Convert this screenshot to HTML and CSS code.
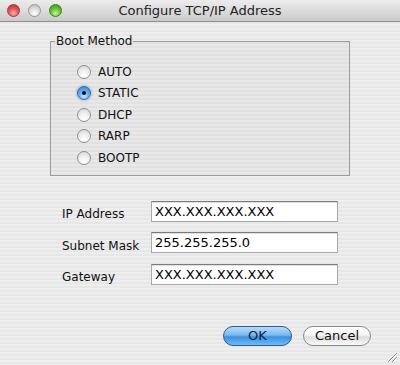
FILE: index.html
```html
<!DOCTYPE html>
<html>
<head>
<meta charset="utf-8">
<link rel="stylesheet" href="styles.css">
</head>
<body>
<div class="window">
  <div class="titlebar">
    <div class="lights">
      <span class="light red"></span>
      <span class="light gray"></span>
      <span class="light green"></span>
    </div>
    <div class="title">Configure TCP/IP Address</div>
  </div>
  <div class="content">
    <fieldset class="group">
      <legend>Boot Method</legend>
      <div class="radio"><span class="circle"></span><span>AUTO</span></div>
      <div class="radio"><span class="circle on"></span><span>STATIC</span></div>
      <div class="radio"><span class="circle"></span><span>DHCP</span></div>
      <div class="radio"><span class="circle"></span><span>RARP</span></div>
      <div class="radio"><span class="circle"></span><span>BOOTP</span></div>
    </fieldset>
    <div class="fields">
      <span class="lbl">IP Address</span><div class="field">XXX.XXX.XXX.XXX</div>
      <span class="lbl">Subnet Mask</span><div class="field">255.255.255.0</div>
      <span class="lbl">Gateway</span><div class="field">XXX.XXX.XXX.XXX</div>
    </div>
    <div class="buttons">
      <div class="btn ok">OK</div>
      <div class="btn cancel">Cancel</div>
    </div>
  </div>
  <svg class="grip" width="11" height="11" viewBox="0 0 11 11">
    <line x1="1" y1="10" x2="10" y2="1" stroke="#8a8a8a" stroke-width="1"/>
    <line x1="5" y1="10" x2="10" y2="5" stroke="#8a8a8a" stroke-width="1"/>
    <line x1="2" y1="10" x2="10" y2="2" stroke="#ffffff" stroke-width="1"/>
    <line x1="6" y1="10" x2="10" y2="6" stroke="#ffffff" stroke-width="1"/>
  </svg>
</div>
</body>
</html>
```
FILE: styles.css
```css
html, body {
  margin: 0;
  padding: 0;
}
body {
  width: 400px;
  height: 365px;
  overflow: hidden;
  font-family: "DejaVu Sans", sans-serif;
  font-size: 12px;
  color: #111;
}
.window {
  position: relative;
  width: 400px;
  height: 365px;
  background: repeating-linear-gradient(to bottom, #eeeeee 0 2px, #e7e7e7 2px 4px);
}
.titlebar {
  height: 21px;
  border-bottom: 1px solid #8e8e8e;
  background: linear-gradient(to bottom, #ececec 0%, #dcdcdc 50%, #c9c9c9 100%);
  display: flex;
  align-items: center;
  position: relative;
}
.lights {
  display: flex;
  gap: 8px;
  padding-left: 7px;
}
.light {
  width: 13px;
  height: 13px;
  border-radius: 50%;
  box-sizing: border-box;
}
.red {
  background: radial-gradient(circle at 50% 75%, #ffb3b3 0%, #e8595a 45%, #b52a2c 100%);
  border: 1px solid #9a3a3a;
}
.gray {
  background: radial-gradient(circle at 50% 75%, #ffffff 0%, #dcdcdc 50%, #b0b0b0 100%);
  border: 1px solid #9a9a9a;
}
.green {
  background: radial-gradient(circle at 50% 75%, #c8f5a0 0%, #6bc43b 45%, #3b8f1a 100%);
  border: 1px solid #3f7d25;
}
.title {
  position: absolute;
  left: 0;
  right: 0;
  top: 0;
  line-height: 22px;
  text-align: center;
  font-size: 13px;
  color: #222;
}
.content {
  display: flex;
  flex-direction: column;
}
.group {
  margin: 12px 0 0 50px;
  width: 300px;
  box-sizing: border-box;
  border: 1px solid #9c9c9c;
  padding: 13px 0 6px 26px;
  background: rgba(0, 0, 0, 0.025);
}
.group legend {
  padding: 0 1px;
  margin-left: -22px;
  line-height: 14px;
  font-size: 12px;
  color: #111;
}
.radio {
  height: 21.5px;
  display: flex;
  align-items: center;
  gap: 7px;
}
.circle {
  width: 14px;
  height: 14px;
  border-radius: 50%;
  box-sizing: border-box;
  border: 1px solid #8d8d8d;
  background: radial-gradient(circle at 50% 80%, #ffffff 0%, #f2f2f2 40%, #d4d4d4 100%);
  position: relative;
}
.circle.on {
  border-color: #3a67a6;
  background: radial-gradient(circle at 50% 75%, #c8e8ff 0%, #6fb4ef 40%, #2f7fd3 100%);
  box-shadow: 0 0 2px 1px rgba(90, 150, 220, 0.45);
}
.circle.on::after {
  content: "";
  position: absolute;
  left: 4px;
  top: 4px;
  width: 4px;
  height: 4px;
  border-radius: 50%;
  background: #111;
}
.fields {
  margin: 25px 0 0 62px;
  display: grid;
  grid-template-columns: 89px 187px;
  grid-auto-rows: 21px;
  row-gap: 10.5px;
  align-items: center;
}
.lbl {
  font-size: 12px;
  color: #111;
  padding-top: 6px;
}
.field {
  height: 21px;
  box-sizing: border-box;
  background: #fff;
  border: 1px solid #a8a8a8;
  border-top-color: #7c7c7c;
  box-shadow: inset 0 1px 0 #e0e0e0;
  font-size: 13px;
  line-height: 19px;
  padding-left: 3px;
  color: #000;
}
.buttons {
  margin: 41px 29px 0 0;
  display: flex;
  justify-content: flex-end;
  gap: 11px;
}
.btn {
  height: 20px;
  box-sizing: border-box;
  border-radius: 10px;
  font-size: 13px;
  line-height: 18px;
  text-align: center;
}
.ok {
  width: 69px;
  border: 1px solid #2d5a96;
  background: linear-gradient(to bottom, #b6dcfb 0%, #7ab8ef 45%, #3d8fe0 55%, #6dbcf6 100%);
  color: #0e2447;
}
.cancel {
  width: 68px;
  border: 1px solid #8a8a8a;
  background: linear-gradient(to bottom, #ffffff 0%, #f4f4f4 45%, #dedede 55%, #f8f8f8 100%);
  color: #111;
}
.grip {
  position: absolute;
  right: 2px;
  bottom: 2px;
}
```
